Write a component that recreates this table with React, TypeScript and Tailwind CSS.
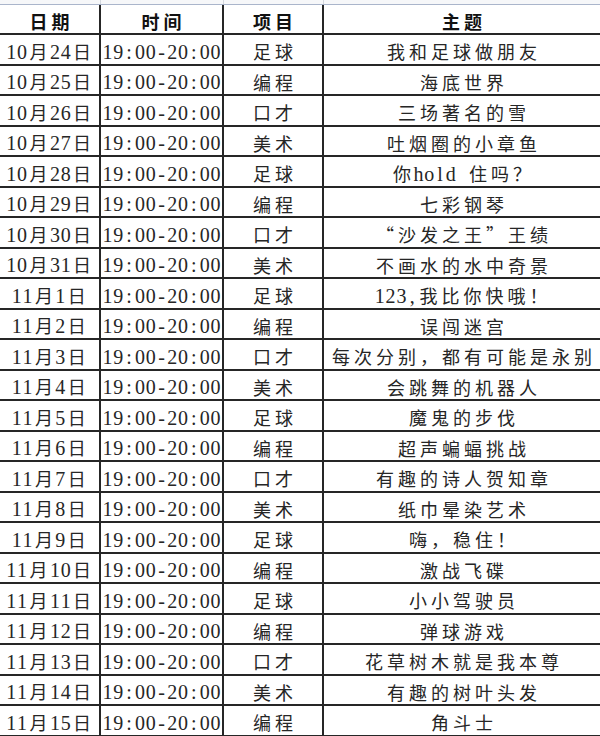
import React from "react";

type Row = { date: string; item: string; topic: string };

const TIME = "19:00-20:00";

const rows: Row[] = [
  { date: "10月24日", item: "足球", topic: "我和足球做朋友" },
  { date: "10月25日", item: "编程", topic: "海底世界" },
  { date: "10月26日", item: "口才", topic: "三场著名的雪" },
  { date: "10月27日", item: "美术", topic: "吐烟圈的小章鱼" },
  { date: "10月28日", item: "足球", topic: "你hold 住吗？" },
  { date: "10月29日", item: "编程", topic: "七彩钢琴" },
  { date: "10月30日", item: "口才", topic: "“沙发之王”王绩" },
  { date: "10月31日", item: "美术", topic: "不画水的水中奇景" },
  { date: "11月1日", item: "足球", topic: "123,我比你快哦！" },
  { date: "11月2日", item: "编程", topic: "误闯迷宫" },
  { date: "11月3日", item: "口才", topic: "每次分别，都有可能是永别" },
  { date: "11月4日", item: "美术", topic: "会跳舞的机器人" },
  { date: "11月5日", item: "足球", topic: "魔鬼的步伐" },
  { date: "11月6日", item: "编程", topic: "超声蝙蝠挑战" },
  { date: "11月7日", item: "口才", topic: "有趣的诗人贺知章" },
  { date: "11月8日", item: "美术", topic: "纸巾晕染艺术" },
  { date: "11月9日", item: "足球", topic: "嗨，稳住！" },
  { date: "11月10日", item: "编程", topic: "激战飞碟" },
  { date: "11月11日", item: "足球", topic: "小小驾驶员" },
  { date: "11月12日", item: "编程", topic: "弹球游戏" },
  { date: "11月13日", item: "口才", topic: "花草树木就是我本尊" },
  { date: "11月14日", item: "美术", topic: "有趣的树叶头发" },
  { date: "11月15日", item: "编程", topic: "角斗士" },
];

// SimSun-like grid: ascii chars get a half-width box, wide chars a 22px box
function CellText({ text }: { text: string }) {
  return (
    <span className="whitespace-nowrap">
      {Array.from(text).map((ch, i) =>
        /[\x20-\x7e]/.test(ch) ? (
          <span
            key={i}
            className="inline-block w-[10.8px] text-center font-['Liberation_Serif',serif] text-[20px] whitespace-pre"
          >
            {ch}
          </span>
        ) : (
          <span
            key={i}
            className="inline-block w-[22px] text-center font-['Noto_Sans_CJK_SC',sans-serif]"
          >
            {ch}
          </span>
        )
      )}
    </span>
  );
}

const cols = ["w-[101px]", "w-[123px]", "w-[100px]", "flex-1"];

function Cell({
  w,
  last,
  bold,
  children,
}: {
  w: string;
  last?: boolean;
  bold?: boolean;
  children: React.ReactNode;
}) {
  return (
    <div
      className={`${w} ${
        last ? "" : "border-r-2 border-[#262626]"
      } flex h-full shrink-0 items-center justify-center overflow-hidden pt-[5px] ${
        bold ? "font-bold text-[#111]" : "font-normal"
      }`}
    >
      {children}
    </div>
  );
}

export default function App() {
  return (
    <div className="h-[736px] w-[600px] overflow-hidden bg-white text-[18px] leading-none text-[#262626]">
      <div className="flex h-[5px] border-b border-[#aab5cb] bg-[#f6f7f9]">
        <div className="w-[101px] border-r border-[#d3d7de]" />
        <div className="w-[123px] border-r border-[#d3d7de]" />
        <div className="w-[100px] border-r border-[#d3d7de]" />
        <div className="flex-1" />
      </div>

      <div className="flex h-[30px] border-b-2 border-[#262626]">
        <Cell w={cols[0]} bold>
          <CellText text="日期" />
        </Cell>
        <Cell w={cols[1]} bold>
          <CellText text="时间" />
        </Cell>
        <Cell w={cols[2]} bold>
          <CellText text="项目" />
        </Cell>
        <Cell w={cols[3]} bold last>
          <CellText text="主题" />
        </Cell>
      </div>

      {rows.map((r) => (
        <div key={r.date} className="flex h-[30.5px] border-b-2 border-[#262626]">
          <Cell w={cols[0]}>
            <CellText text={r.date} />
          </Cell>
          <Cell w={cols[1]}>
            <CellText text={TIME} />
          </Cell>
          <Cell w={cols[2]}>
            <CellText text={r.item} />
          </Cell>
          <Cell w={cols[3]} last>
            <CellText text={r.topic} />
          </Cell>
        </div>
      ))}
    </div>
  );
}
